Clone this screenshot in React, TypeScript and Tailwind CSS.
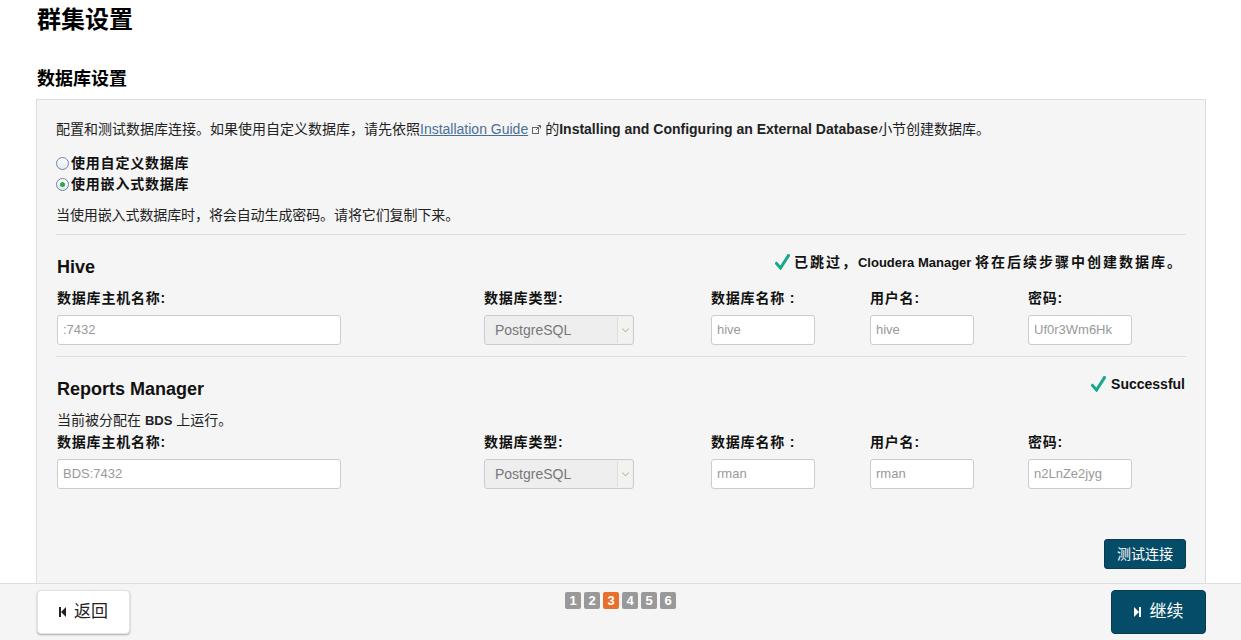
import React from "react";

const font = "font-['Liberation_Sans','Noto_Sans_CJK_SC',sans-serif]";

function Check() {
  return (
    <svg width="15" height="16" viewBox="0 0 15 16" className="shrink-0">
      <path d="M1.5 9.5 L5.5 14 L13.5 1.5" fill="none" stroke="#17a88b" strokeWidth="3" strokeLinecap="square" />
    </svg>
  );
}

function ExtLink() {
  return (
    <svg width="9" height="9" viewBox="0 0 9 9" className="inline-block mx-[4px] align-[0px]">
      <rect x="0.5" y="2.5" width="6" height="6" fill="none" stroke="#666" strokeWidth="1" />
      <path d="M4 5 L8.5 0.5 M5.5 0.5 H8.5 V3.5" fill="none" stroke="#666" strokeWidth="1" />
    </svg>
  );
}

function Radio({ checked, label }: { checked?: boolean; label: string }) {
  return (
    <div className="flex items-center h-[21px]">
      <span className="w-[13px] h-[13px] rounded-full border border-[#6b87a8] bg-gradient-to-b from-white to-[#e4e8ee] flex items-center justify-center mr-[2px]">
        {checked && <span className="w-[5px] h-[5px] rounded-full bg-[#2fa64a]" />}
      </span>
      <span className="font-bold text-[14px] tracking-[0.8px] text-[#111]">{label}</span>
    </div>
  );
}

function Input({ value, w }: { value: string; w: string }) {
  return (
    <div className={`${w} h-[30px] bg-white border border-[#ccc] rounded-[3px] px-[5px] flex items-center text-[13px] text-[#999]`}>
      {value}
    </div>
  );
}

function Select() {
  return (
    <div className="w-[150px] h-[30px] bg-[#eee] border border-[#ccc] rounded-[3px] pl-[10px] pr-[1px] flex items-center justify-between text-[14px] text-[#777]">
      <span>PostgreSQL</span>
      <span className="w-[15px] h-[26px] bg-[#f2f2ee] border-l border-[#ddd] flex items-center justify-center">
        <svg width="7" height="5" viewBox="0 0 7 5">
          <path d="M0.5 0.5 L3.5 4 L6.5 0.5" fill="none" stroke="#aaa" strokeWidth="1" />
        </svg>
      </span>
    </div>
  );
}

function Fields({ host, name, user, pwd }: { host: string; name: string; user: string; pwd: string }) {
  const label = "h-[20px] leading-[20px] font-bold text-[14px] tracking-[0.8px] text-[#111]";
  return (
    <div className="grid grid-cols-[427px_227px_159px_158px_1fr]">
      <div className={label}>数据库主机名称:</div>
      <div className={label}>数据库类型:</div>
      <div className={label}>数据库名称 :</div>
      <div className={label}>用户名:</div>
      <div className={label}>密码:</div>
      <div className="mt-[7px]"><Input value={host} w="w-[284px]" /></div>
      <div className="mt-[7px]"><Select /></div>
      <div className="mt-[7px]"><Input value={name} w="w-[104px]" /></div>
      <div className="mt-[7px]"><Input value={user} w="w-[104px]" /></div>
      <div className="mt-[7px]"><Input value={pwd} w="w-[104px]" /></div>
    </div>
  );
}

export default function App() {
  return (
    <div className={`h-[640px] flex flex-col bg-white text-[#222] ${font}`}>
      <div className="flex-1 overflow-hidden pl-[36px] pr-[35px]">
        <h1 className="mt-[5px] pl-px h-[30px] leading-[30px] text-[24px] font-bold text-black">群集设置</h1>
        <h2 className="mt-[32px] pl-px h-[24px] leading-[24px] text-[18px] font-bold text-black">数据库设置</h2>
        <div className="mt-[8px] bg-[#f5f5f5] border border-[#ddd] px-[19px] pt-[19px] h-[600px]">
          <p className="h-[20px] leading-[20px] text-[14px] whitespace-nowrap">
            配置和测试数据库连接。如果使用自定义数据库，请先依照
            <a className="text-[#4a6f96] underline">Installation Guide</a>
            <ExtLink />
            的<b>Installing and Configuring an External Database</b>小节创建数据库。
          </p>
          <div className="mt-[14px]">
            <Radio label="使用自定义数据库" />
            <Radio checked label="使用嵌入式数据库" />
          </div>
          <p className="mt-[10px] h-[20px] leading-[20px] text-[14px] tracking-[-0.1px]">当使用嵌入式数据库时，将会自动生成密码。请将它们复制下来。</p>
          <div className="mt-[9px] border-t border-[#ddd]" />

          <div className="mt-[17px] pl-px pr-px flex justify-between items-start">
            <h3 className="mt-[3px] h-[24px] leading-[24px] text-[18px] font-bold text-[#111]">Hive</h3>
            <div className="h-[20px] flex items-center gap-[4px] font-bold text-[14px] text-[#111] mr-[2px]">
              <Check />
              <span>
                <span className="tracking-[2px]">已跳过，</span>
                <span className="text-[13px]">Cloudera Manager </span>
                <span className="tracking-[2px]">将在后续步骤中创建数据库。</span>
              </span>
            </div>
          </div>
          <div className="mt-[9px] pl-px">
            <Fields host=":7432" name="hive" user="hive" pwd="Uf0r3Wm6Hk" />
          </div>
          <div className="mt-[11px] border-t border-[#ddd]" />

          <div className="mt-[17px] pl-px pr-px flex justify-between items-start">
            <h3 className="mt-[3px] h-[24px] leading-[24px] text-[18px] font-bold text-[#111]">Reports Manager</h3>
            <div className="h-[20px] flex items-center gap-[5px] font-bold text-[14px] text-[#111]">
              <Check />
              <span>Successful</span>
            </div>
          </div>
          <p className="mt-[9px] pl-px h-[20px] leading-[20px] text-[14px]">
            当前被分配在 <b className="text-[13px]">BDS</b> 上运行。
          </p>
          <div className="mt-[2px] pl-px">
            <Fields host="BDS:7432" name="rman" user="rman" pwd="n2LnZe2jyg" />
          </div>
          <div className="mt-[50px] flex justify-end">
            <button className="w-[82px] h-[30px] bg-[#054c69] border border-[#0a3a50] rounded-[3px] text-white text-[14px]">测试连接</button>
          </div>
        </div>
      </div>
      <footer className="h-[57px] shrink-0 bg-[#f5f5f5] border-t border-[#ddd] flex items-start justify-between pl-[37px] pr-[35px] pt-[6px]">
        <button className="w-[93px] h-[44px] bg-white rounded-[4px] border border-[#e2e2e2] shadow-[0_1px_2px_rgba(0,0,0,0.3)] flex items-center justify-center gap-[8px] text-[17px] text-[#222]">
          <svg width="7" height="10" viewBox="0 0 7 10">
            <rect x="0" y="0" width="2" height="10" fill="#222" />
            <path d="M7 0 L2 5 L7 10 Z" fill="#222" />
          </svg>
          返回
        </button>
        <div className="mt-[2px] flex gap-[3px]">
          {[1, 2, 3, 4, 5, 6].map((n) => (
            <span
              key={n}
              className={`w-[16px] h-[17px] rounded-[2px] flex items-center justify-center text-white font-bold text-[13px] ${n === 3 ? "bg-[#e8702a]" : "bg-[#999]"}`}
            >
              {n}
            </span>
          ))}
        </div>
        <button className="w-[95px] h-[44px] bg-[#054c69] rounded-[4px] border border-[#0a3a50] flex items-center justify-center gap-[9px] text-[17px] text-white">
          <svg width="7" height="10" viewBox="0 0 7 10">
            <path d="M0 0 L5 5 L0 10 Z" fill="white" />
            <rect x="5" y="0" width="2" height="10" fill="white" />
          </svg>
          继续
        </button>
      </footer>
    </div>
  );
}
